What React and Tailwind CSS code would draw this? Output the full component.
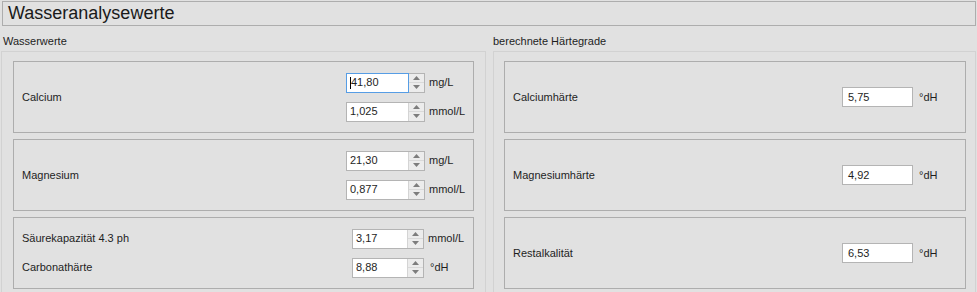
import React from 'react';

const font = { fontFamily: '"Liberation Sans", Arial, sans-serif' };

const SpinButtons = () => (
  <div className="flex w-[16px] flex-col border-l border-[#d4d4d4] bg-[#ececec]">
    <div className="flex flex-1 items-center justify-center border-b border-[#d9d9d9]">
      <svg width="7" height="4" viewBox="0 0 7 4">
        <path d="M0 4 L3.5 0 L7 4 Z" fill="#7d7d7d" />
      </svg>
    </div>
    <div className="flex flex-1 items-center justify-center">
      <svg width="7" height="4" viewBox="0 0 7 4">
        <path d="M0 0 L3.5 4 L7 0 Z" fill="#7d7d7d" />
      </svg>
    </div>
  </div>
);

const SpinBox = ({ value, focused, narrow }) => (
  <div
    className={
      narrow
        ? 'flex h-[20px] w-[72px] border border-[#b4b4b4] bg-white'
        : 'flex h-[20px] w-[79px] border border-[#b4b4b4] bg-white'
    }
  >
    <div
      className={
        focused
          ? 'relative -m-px flex flex-1 items-center border border-[#569de5] pl-[4px] text-[11px] text-[#1e1e1e]'
          : 'flex flex-1 items-center pl-[3px] text-[11px] text-[#1e1e1e]'
      }
    >
      {focused && <span className="absolute left-[3px] top-[3px] h-[12px] w-px bg-black" />}
      {value}
    </div>
    <SpinButtons />
  </div>
);

const Unit = ({ children }) => (
  <span className="ml-[4px] text-[11px] text-[#1e1e1e]">{children}</span>
);

const Box = ({ children }) => (
  <div className="flex h-[72px] border border-[#adadad] pl-[8px]">{children}</div>
);

const Field = ({ value }) => (
  <div className="flex h-[20px] w-[71px] items-center border border-[#b4b4b4] bg-white pl-[5px] text-[11px] text-[#1e1e1e]">
    {value}
  </div>
);

const HardnessBox = ({ label, value }) => (
  <Box>
    <div className="flex flex-1 items-center">
      <span className="w-[329px] text-[11px] text-[#1e1e1e]">{label}</span>
      <Field value={value} />
      <span className="ml-[6px] text-[11px] text-[#1e1e1e]">°dH</span>
    </div>
  </Box>
);

const PairBox = ({ label, a, b, focused }) => (
  <Box>
    <div className="flex flex-1 items-center">
      <span className="w-[324px] text-[11px] text-[#1e1e1e]">{label}</span>
      <div className="flex flex-col gap-[9px]">
        <div className="flex items-center">
          <SpinBox value={a} focused={focused} />
          <Unit>mg/L</Unit>
        </div>
        <div className="flex items-center">
          <SpinBox value={b} />
          <Unit>mmol/L</Unit>
        </div>
      </div>
    </div>
  </Box>
);

export default function App() {
  return (
    <div
      className="h-[292px] w-[977px] overflow-hidden bg-[#e1e1e1] pt-px"
      style={font}
    >
      <div className="ml-[2px] flex h-[25px] w-[974px] items-center border border-[#adadad] pl-[5px] text-[18px] text-[#1a1a1a]">
        Wasseranalysewerte
      </div>

      <div className="flex gap-[7px] pl-px">
        <div className="w-[485px]">
          <div className="pl-[2px] pt-[9px] pb-[4px] text-[11px] leading-[12px] text-[#1e1e1e]">Wasserwerte</div>
          <div className="flex h-[260px] flex-col gap-[6px] border border-[#d2d2d2] px-[11px] pt-[9px]">
            <PairBox label="Calcium" a="41,80" b="1,025" focused />
            <PairBox label="Magnesium" a="21,30" b="0,877" />
            <Box>
              <div className="flex flex-1 flex-col justify-center gap-[9px]">
                <div className="flex items-center">
                  <span className="w-[330px] text-[11px] text-[#1e1e1e]">Säurekapazität 4.3 ph</span>
                  <SpinBox value="3,17" narrow />
                  <Unit>mmol/L</Unit>
                </div>
                <div className="flex items-center">
                  <span className="w-[330px] text-[11px] text-[#1e1e1e]">Carbonathärte</span>
                  <SpinBox value="8,88" narrow />
                  <span className="ml-[6px] text-[11px] text-[#1e1e1e]">°dH</span>
                </div>
              </div>
            </Box>
          </div>
        </div>

        <div className="w-[483px]">
          <div className="pl-[0px] pt-[9px] pb-[4px] text-[11px] leading-[12px] text-[#1e1e1e]">berechnete Härtegrade</div>
          <div className="flex h-[260px] flex-col gap-[6px] border border-[#d2d2d2] pl-[10px] pr-[9px] pt-[9px]">
            <HardnessBox label="Calciumhärte" value="5,75" />
            <HardnessBox label="Magnesiumhärte" value="4,92" />
            <HardnessBox label="Restalkalität" value="6,53" />
          </div>
        </div>
      </div>
    </div>
  );
}
